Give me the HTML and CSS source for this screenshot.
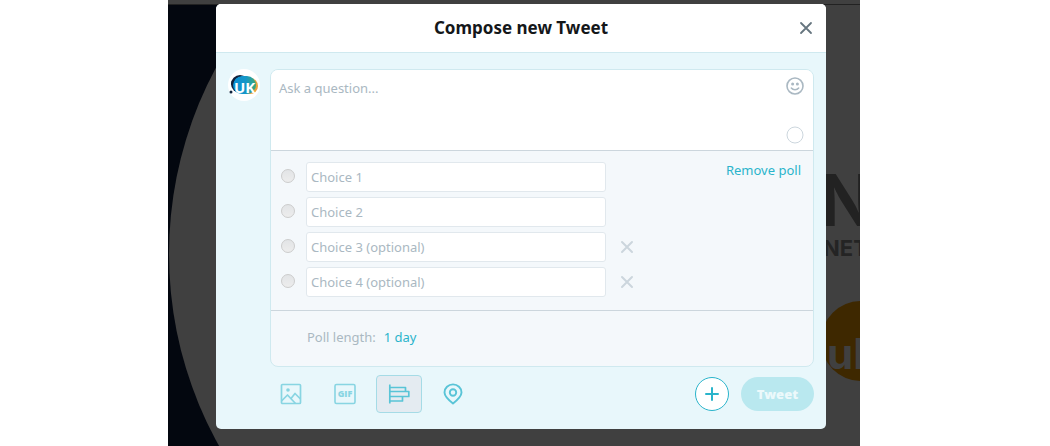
FILE: index.html
```html
<!DOCTYPE html>
<html lang="en">
<head>
    <meta charset="UTF-8">
    <meta name="viewport" content="width=device-width, initial-scale=1.0">
    <title>Compose new Tweet</title>
    <link rel="stylesheet" href="styles.css">
</head>
<body>
    <div class="stage">
        <!-- Dimmed profile page behind the dialog -->
        <svg class="backdrop" viewBox="0 0 692 446" preserveAspectRatio="xMinYMin slice" aria-hidden="true">
            <rect width="692" height="446" fill="#404040"/>
            <rect y="4" width="90" height="442" fill="#03070f"/>
            <circle cx="394" cy="254" r="393" fill="#404040"/>
            <rect y="4" width="692" height="1" fill="#222"/>
            <text class="backdrop-title" x="651" y="226">N</text>
            <text class="backdrop-sub" x="655" y="256">NET</text>
            <circle cx="693" cy="341" r="40" fill="#3e2800"/>
            <text class="backdrop-badge" x="659" y="369">uk</text>
        </svg>

        <div class="modal" role="dialog" aria-labelledby="modal-title">
            <header class="modal-header">
                <h1 id="modal-title">Compose new Tweet</h1>
                <button type="button" class="close" aria-label="Close">
                    <svg width="14" height="14" viewBox="0 0 14 14"><path d="M2 2l10 10M12 2L2 12" fill="none" stroke="#66757f" stroke-width="1.8" stroke-linecap="round"/></svg>
                </button>
            </header>

            <form class="compose">
                <svg class="avatar" width="32" height="32" viewBox="0 0 32 32" role="img" aria-label="UK">
                    <defs>
                        <linearGradient id="avatar-blue" x1="0" x2="1">
                            <stop offset="0" stop-color="#0a8fd6"/>
                            <stop offset="0.55" stop-color="#1597c8"/>
                            <stop offset="1" stop-color="#3ca878"/>
                        </linearGradient>
                    </defs>
                    <circle cx="16" cy="16" r="16" fill="#fff"/>
                    <circle cx="12" cy="15" r="9" fill="#12243f"/>
                    <circle cx="22" cy="17" r="8" fill="#e9a23b"/>
                    <rect x="5" y="7" width="23" height="18" rx="9" fill="url(#avatar-blue)"/>
                    <path d="M3 15a9 9 0 0 1 10-8c-5 1-8 4-8 11z" fill="#12243f"/>
                    <circle cx="3" cy="23" r="1.5" fill="#12243f"/>
                    <text class="avatar-text" x="6" y="24">UK</text>
                </svg>

                <div class="compose-main">
                    <div class="card">
                        <div class="question">
                            <textarea aria-label="Question" placeholder="Ask a question..."></textarea>
                            <div class="question-side">
                                <button type="button" class="emoji" aria-label="Add emoji">
                                    <svg width="18" height="18" viewBox="0 0 18 18">
                                        <circle cx="9" cy="9" r="8" fill="none" stroke="#aab8c2" stroke-width="1.6"/>
                                        <circle cx="6.6" cy="7" r="1.5" fill="#aab8c2"/>
                                        <circle cx="11.4" cy="7" r="1.5" fill="#aab8c2"/>
                                        <path d="M5.3 11c1.8 2.2 5.6 2.2 7.4 0" fill="none" stroke="#aab8c2" stroke-width="1.5" stroke-linecap="round"/>
                                    </svg>
                                </button>
                                <svg width="18" height="18" viewBox="0 0 18 18"><circle cx="9" cy="9" r="8" fill="none" stroke="#ccd6dd"/></svg>
                            </div>
                        </div>

                        <div class="poll">
                            <div class="choices">
                                <div class="choice">
                                    <input type="radio" name="choice" aria-label="Choice 1" disabled>
                                    <input type="text" aria-label="Choice 1" placeholder="Choice 1">
                                </div>
                                <div class="choice">
                                    <input type="radio" name="choice" aria-label="Choice 2" disabled>
                                    <input type="text" aria-label="Choice 2" placeholder="Choice 2">
                                </div>
                                <div class="choice">
                                    <input type="radio" name="choice" aria-label="Choice 3" disabled>
                                    <input type="text" aria-label="Choice 3" placeholder="Choice 3 (optional)">
                                    <button type="button" class="remove" aria-label="Remove choice 3">
                                        <svg width="14" height="14" viewBox="0 0 14 14"><path d="M2 2l10 10M12 2L2 12" fill="none" stroke="#ccd6dd" stroke-width="2" stroke-linecap="round"/></svg>
                                    </button>
                                </div>
                                <div class="choice">
                                    <input type="radio" name="choice" aria-label="Choice 4" disabled>
                                    <input type="text" aria-label="Choice 4" placeholder="Choice 4 (optional)">
                                    <button type="button" class="remove" aria-label="Remove choice 4">
                                        <svg width="14" height="14" viewBox="0 0 14 14"><path d="M2 2l10 10M12 2L2 12" fill="none" stroke="#ccd6dd" stroke-width="2" stroke-linecap="round"/></svg>
                                    </button>
                                </div>
                            </div>
                            <button type="button" class="text-button">Remove poll</button>
                        </div>

                        <div class="poll-length">
                            <span>Poll length:</span>
                            <button type="button" class="text-button">1 day</button>
                        </div>
                    </div>

                    <div class="toolbar">
                        <button type="button" class="tool faded" aria-label="Add photo">
                            <svg width="22" height="22" viewBox="0 0 22 22" fill="none" stroke="#2ab4cb" stroke-width="1.7" stroke-linejoin="round">
                                <rect x="1.5" y="1.5" width="19" height="19" rx="1"/>
                                <circle cx="8" cy="7" r="1.8" fill="#2ab4cb" stroke="none"/>
                                <path d="M1.5 18l6-6 8 8.5M11 15.5l4-5 5.5 5.5"/>
                            </svg>
                        </button>
                        <button type="button" class="tool faded" aria-label="Add GIF">
                            <svg width="22" height="22" viewBox="0 0 22 22">
                                <rect x="1" y="1.5" width="20" height="19" rx="1.5" fill="none" stroke="#2ab4cb" stroke-width="1.6"/>
                                <text class="gif-text" x="11" y="14" text-anchor="middle">GIF</text>
                            </svg>
                        </button>
                        <button type="button" class="tool active" aria-label="Add poll">
                            <svg width="22" height="22" viewBox="0 0 22 22" fill="none" stroke="#2ab4cb" stroke-width="1.7" stroke-linejoin="round">
                                <path d="M1.8 1.5v19"/>
                                <path d="M2 4.5h15.5v4M2 8.500h18.800v5H2M14.500 13.500v4.500H2"/>
                            </svg>
                        </button>
                        <button type="button" class="tool" aria-label="Add location">
                            <svg width="22" height="22" viewBox="0 0 22 22" fill="none" stroke="#2ab4cb" stroke-width="1.9" stroke-linejoin="round">
                                <path d="M11 20.5C6.5 16.8 2.5 13.3 2.5 9.4a8.5 8 0 0 1 17 0c0 3.900-4 7.400-8.500 11.100z"/>
                                <circle cx="11" cy="9.5" r="3.2"/>
                            </svg>
                        </button>
                        <button type="button" class="add" aria-label="Add another Tweet">
                            <svg width="14" height="14" viewBox="0 0 14 14"><path d="M7 1v12M1 7h12" stroke="#2ab4cb" stroke-width="2" stroke-linecap="round"/></svg>
                        </button>
                        <button type="submit" class="tweet" disabled>Tweet</button>
                    </div>
                </div>
            </form>
        </div>
    </div>
</body>
</html>
```
FILE: styles.css
```css
* {
    box-sizing: border-box;
}

body {
    margin: 0;
    background: #fff;
    color: #14171a;
    font-family: "Noto Sans", "Open Sans", sans-serif;
    font-size: 13px;
    line-height: 20px;
}

button, input, textarea {
    font: inherit;
    margin: 0;
}

button {
    display: flex;
    align-items: center;
    justify-content: center;
    padding: 0;
    border: 0;
    background: none;
    cursor: pointer;
}

svg {
    display: block;
    flex: none;
}

.stage {
    position: relative;
    max-width: 692px;
    min-height: 100vh;
    margin-left: 16%;
    padding: 4px 34px 16px 48px;
    overflow: hidden;
    background: #404040;
}

.backdrop {
    position: absolute;
    top: 0;
    left: 0;
    width: 100%;
    height: 100%;
}

.backdrop text {
    font-family: Inter, sans-serif;
    font-weight: bold;
}

.backdrop-title {
    font-size: 72px;
    fill: #222;
}

.backdrop-sub {
    font-size: 22px;
    fill: #242424;
}

.backdrop-badge {
    font-size: 42px;
    fill: #404040;
}

.modal {
    position: relative;
    border-radius: 5px;
    overflow: hidden;
    background: #e8f7fb;
}

.modal-header {
    display: flex;
    align-items: center;
    padding: 12px 13px 12px 27px;
    border-bottom: 1px solid #cfe9ef;
    background: #fff;
}

.modal-header h1 {
    flex: 1;
    margin: 0;
    font-size: 17px;
    line-height: 24px;
    font-weight: 700;
    text-align: center;
}

.compose {
    display: flex;
    gap: 10px;
    padding: 16px 12px;
}

.avatar-text {
    font: bold 15px "Open Sans", sans-serif;
    fill: #fff;
}

.compose-main {
    flex: 1;
    min-width: 0;
}

.card {
    border: 1px solid #cfe9ef;
    border-radius: 8px;
    overflow: hidden;
    background: #f4f8fb;
}

.question {
    display: flex;
    height: 81px;
    border-bottom: 1px solid #ccd6dd;
    background: #fff;
}

.question textarea {
    flex: 1;
    padding: 8px;
    border: 0;
    outline: 0;
    resize: none;
    background: none;
}

::placeholder {
    color: #aab8c2;
    opacity: 1;
}

.question-side {
    display: flex;
    flex-direction: column;
    justify-content: space-between;
    padding: 7px 9px 6px 0;
}

.poll {
    display: flex;
    align-items: flex-start;
    justify-content: space-between;
    padding: 11px 12px 13px 10px;
    border-bottom: 1px solid #ccd6dd;
}

.choices {
    display: grid;
    gap: 5px;
}

.choice {
    display: flex;
    align-items: center;
}

.choice input[type="radio"] {
    appearance: none;
    width: 14px;
    height: 14px;
    margin: 0 11px 2px 0;
    border: 1px solid #ccc;
    border-radius: 50%;
    background: linear-gradient(#e2e4e6, #ededed);
}

.choice input[type="text"] {
    width: 300px;
    height: 30px;
    padding: 0 4px;
    border: 1px solid #e1e8ed;
    border-radius: 3px;
    outline: 0;
    background: #fff;
}

.remove {
    margin-left: 14px;
}

.text-button {
    color: #2ab4cb;
}

.poll > .text-button {
    margin-top: -2px;
}

.poll-length {
    display: flex;
    gap: 8px;
    padding: 16px 36px 19px;
    color: #aab8c2;
}

.toolbar {
    display: flex;
    align-items: center;
    gap: 8px;
    padding-top: 8px;
}

.tool {
    width: 46px;
    height: 38px;
    border: 1px solid transparent;
    border-radius: 4px;
    opacity: 0.75;
}

.tool.faded {
    opacity: 0.5;
}

.tool:first-child {
    margin-left: -2px;
}

.tool.active {
    border-color: #8fd2df;
    background: #e3e8ee;
}

.gif-text {
    font: 800 9px "Open Sans", sans-serif;
    fill: #2ab4cb;
}

.add {
    width: 34px;
    height: 34px;
    margin-left: auto;
    border: 1px solid #2ab4cb;
    border-radius: 50%;
    background: #fff;
}

.tweet {
    width: 73px;
    height: 34px;
    margin-left: 4px;
    border-radius: 17px;
    background: #b9e8ef;
    color: #ecf9fb;
    font-weight: 900;
}
```
